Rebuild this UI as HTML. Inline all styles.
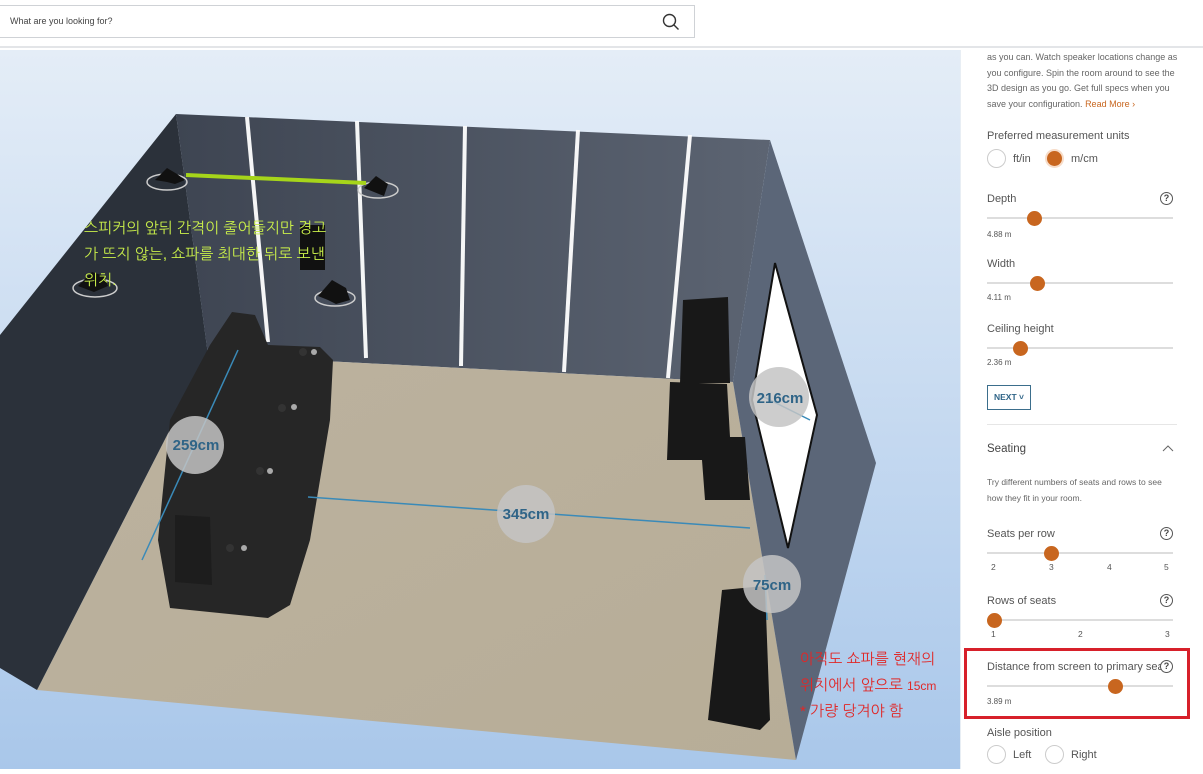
<!DOCTYPE html>
<html><head><meta charset="utf-8"><style>
*{margin:0;padding:0;box-sizing:border-box}
body{width:1203px;height:769px;overflow:hidden;background:#fff;font-family:"Liberation Sans",sans-serif;position:relative}
.hdr{position:absolute;left:0;top:0;width:1203px;height:48px;background:#fff;border-bottom:2px solid #e3e5e8}
.search{position:absolute;left:-2px;top:5px;width:697px;height:33px;border:1px solid #cfd2d6;background:#fff}
.search span{position:absolute;left:11px;top:10px;font-size:9px;color:#444}
.scene{position:absolute;left:0;top:50px;width:960px;height:719px}
.panel{position:absolute;left:960px;top:50px;width:243px;height:719px;background:#fff;border-left:1px solid #e8eef4;color:#444}
.p{position:absolute;left:26px;font-size:11px;color:#555}
.sm{position:absolute;left:26px;font-size:9px;color:#666;line-height:15.5px;width:192px}
.track{position:absolute;left:26px;width:186px;height:2px;background:#ddd}
.dot{position:absolute;width:15px;height:15px;border-radius:50%;background:#c8661f}
.q{position:absolute;left:199px;width:13px;height:13px;border:1.3px solid #555;border-radius:50%;font-size:9px;text-align:center;line-height:11px;color:#444;font-weight:bold}
.radio{position:absolute;width:19px;height:19px;border-radius:50%;border:1px solid #ccc;background:#fff}
.val{position:absolute;left:26px;font-size:8px;color:#555}
.num{position:absolute;font-size:8.5px;color:#555}
.ann{position:absolute;font-family:"Liberation Sans","NanumGothic","Noto Sans CJK KR",sans-serif;font-size:15px;line-height:26px;white-space:nowrap}
</style></head><body>
<div class="scene">
<svg width="960" height="719" viewBox="0 50 960 719">
<defs>
<linearGradient id="bg" x1="0" y1="0" x2="0" y2="1"><stop offset="0" stop-color="#e4edf7"/><stop offset="1" stop-color="#a9c7ea"/></linearGradient>
<linearGradient id="bw" x1="0" y1="0" x2="1" y2="0"><stop offset="0" stop-color="#3e4552"/><stop offset="1" stop-color="#5c6472"/></linearGradient>
<linearGradient id="fl" x1="0" y1="0" x2="1" y2="1"><stop offset="0" stop-color="#bcb29f"/><stop offset="1" stop-color="#b7ad97"/></linearGradient>
</defs>
<rect x="0" y="50" width="960" height="719" fill="url(#bg)"/>
<polygon points="176,114 770,140 733,382 208,355" fill="url(#bw)"/>
<polygon points="208,355 733,382 796,760 37,690" fill="url(#fl)"/>
<polygon points="176,114 208,355 37,690 0,668 0,335" fill="#2b313a"/>
<polygon points="770,140 876,463 796,760 733,382" fill="#5b6678"/>
<polygon points="775,263 817,415 788,548 752,400" fill="#fff" stroke="#111" stroke-width="2"/>
<g stroke="#fff" stroke-width="4" opacity="0.95">
<line x1="247" y1="117" x2="268" y2="342"/>
<line x1="357" y1="121" x2="366" y2="358"/>
<line x1="465" y1="126" x2="461" y2="366"/>
<line x1="578" y1="130" x2="564" y2="372"/>
<line x1="690" y1="135" x2="668" y2="378"/>
</g>
<g fill="none" stroke="#ccc" stroke-width="1.5">
<ellipse cx="167" cy="182" rx="20" ry="8"/><ellipse cx="378" cy="190" rx="20" ry="8"/>
<ellipse cx="95" cy="288" rx="22" ry="9"/><ellipse cx="335" cy="298" rx="20" ry="8"/></g>
<g fill="#111"><path d="M155 180 l12-12 10 6 8 6 -10 4 -8-2z"/><path d="M364 188 l12-12 12 8 -4 12 -10-4z"/><path d="M78 286 l14-14 12 4 4 10 -14 6z"/><path d="M318 296 l14-16 14 8 4 12 -14 4 -8-4z"/>
<rect x="300" y="225" width="25" height="45"/></g>
<line x1="186" y1="175" x2="366" y2="183" stroke="#a6d51a" stroke-width="4"/>
<g fill="#262626">
<polygon points="232,312 255,315 268,345 320,347 333,360 330,420 310,540 290,605 268,618 170,608 158,540 170,420 210,345"/>
</g>
<g fill="#1d1d1d"><polygon points="175,515 210,517 212,585 175,582"/></g>
<g fill="#333"><circle cx="303" cy="352" r="4"/><circle cx="282" cy="408" r="4"/><circle cx="260" cy="471" r="4"/><circle cx="230" cy="548" r="4"/></g>
<g fill="#aaa"><circle cx="314" cy="352" r="3"/><circle cx="294" cy="407" r="3"/><circle cx="270" cy="471" r="3"/><circle cx="244" cy="548" r="3"/></g>
<g fill="#181818">
<polygon points="683,300 728,297 730,383 680,383"/>
<polygon points="670,382 727,384 730,437 745,437 750,500 705,500 702,460 667,460"/>
<polygon points="722,590 765,586 770,720 760,730 708,720"/>
</g>
<g stroke="#3a8ab8" stroke-width="1.5" fill="none">
<line x1="238" y1="350" x2="142" y2="560"/>
<line x1="308" y1="497" x2="750" y2="528"/>
<line x1="765" y1="575" x2="767" y2="620"/>
<line x1="760" y1="395" x2="810" y2="420"/>
</g>
<g fill="#c4c4c4" opacity="0.85">
<circle cx="195" cy="445" r="29"/><circle cx="526" cy="514" r="29"/><circle cx="779" cy="397" r="30"/><circle cx="772" cy="584" r="29"/>
</g>
<g font-family="Liberation Sans" font-weight="bold" font-size="15" fill="#2f6487" text-anchor="middle">
<text x="196" y="450">259cm</text><text x="526" y="519">345cm</text><text x="780" y="403">216cm</text><text x="772" y="590">75cm</text>
</g>
</svg>
</div>
<div class="ann" style="left:84px;top:216px;color:#c9ee4a">스피커의 앞뒤 간격이 줄어들지만 경고<br>가 뜨지 않는, 쇼파를 최대한 뒤로 보낸<br>위치.</div>
<div class="ann" style="left:800px;top:647px;color:#e02828">아직도 쇼파를 현재의<br>위치에서 앞으로 <span style="font-size:12px">15cm</span><br>* 가량 당겨야 함</div>

<div class="hdr"><div class="search"><span>What are you looking for?</span>
<svg style="position:absolute;left:663px;top:7px" width="18" height="18" viewBox="0 0 18 18"><circle cx="7.5" cy="7.5" r="6" fill="none" stroke="#333" stroke-width="1.4"/><line x1="12" y1="12" x2="16.5" y2="16.5" stroke="#333" stroke-width="1.4"/></svg></div></div>

<div class="panel">
<div class="sm" style="top:0px">as you can. Watch speaker locations change as you configure. Spin the room around to see the 3D design as you go. Get full specs when you save your configuration. <span style="color:#c8661f">Read More ›</span></div>
<div class="p" style="top:80px">Preferred measurement units</div>
<div class="radio" style="left:26px;top:99px"></div><div class="p" style="left:52px;top:103px">ft/in</div>
<div class="dot" style="left:86px;top:101px;box-shadow:0 0 0 2px #f7dcc8"></div><div class="p" style="left:110px;top:103px">m/cm</div>

<div class="p" style="top:143px">Depth</div><div class="q" style="top:142px">?</div>
<div class="track" style="top:167px"></div><div class="dot" style="left:66px;top:161px"></div><div class="val" style="top:180px">4.88 m</div>

<div class="p" style="top:208px">Width</div>
<div class="track" style="top:232px"></div><div class="dot" style="left:69px;top:226px"></div><div class="val" style="top:243px">4.11 m</div>

<div class="p" style="top:273px">Ceiling height</div>
<div class="track" style="top:297px"></div><div class="dot" style="left:52px;top:291px"></div><div class="val" style="top:308px">2.36 m</div>

<div style="position:absolute;left:26px;top:335px;width:44px;height:25px;border:1px solid #3b6e8c;color:#2f6487;font-size:8.5px;font-weight:bold;text-align:center;line-height:23px">NEXT ˅</div>
<div style="position:absolute;left:26px;top:374px;width:190px;height:1px;background:#e6e6e6"></div>
<div class="p" style="top:393px;font-size:11.5px;color:#444">Seating</div>
<svg style="position:absolute;left:201px;top:394px" width="12" height="8"><polyline points="1,7 6,2 11,7" fill="none" stroke="#666" stroke-width="1"/></svg>
<div class="sm" style="top:425px;font-size:8.5px;width:188px">Try different numbers of seats and rows to see how they fit in your room.</div>

<div class="p" style="top:478px">Seats per row</div><div class="q" style="top:477px">?</div>
<div class="track" style="top:502px"></div><div class="dot" style="left:83px;top:496px"></div>
<div class="num" style="left:30px;top:512px">2</div><div class="num" style="left:88px;top:512px">3</div><div class="num" style="left:146px;top:512px">4</div><div class="num" style="left:203px;top:512px">5</div>

<div class="p" style="top:545px">Rows of seats</div><div class="q" style="top:544px">?</div>
<div class="track" style="top:569px"></div><div class="dot" style="left:26px;top:563px"></div>
<div class="num" style="left:30px;top:579px">1</div><div class="num" style="left:117px;top:579px">2</div><div class="num" style="left:204px;top:579px">3</div>

<div style="position:absolute;left:3px;top:598px;width:226px;height:71px;border:3px solid #d7202a"></div>
<div class="p" style="top:611px;white-space:nowrap;width:186px;overflow:hidden">Distance from screen to primary seat</div><div class="q" style="top:610px;background:#fff">?</div>
<div class="track" style="top:635px"></div><div class="dot" style="left:147px;top:629px"></div><div class="val" style="top:647px">3.89 m</div>

<div class="p" style="top:677px">Aisle position</div>
<div class="radio" style="left:26px;top:695px"></div><div class="p" style="left:52px;top:699px">Left</div>
<div class="radio" style="left:84px;top:695px"></div><div class="p" style="left:110px;top:699px">Right</div>
</div>
</body></html>
